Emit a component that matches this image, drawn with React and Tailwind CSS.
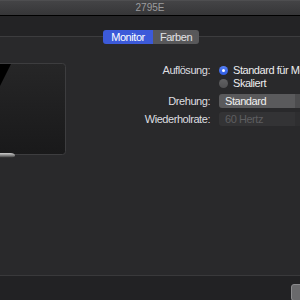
export default function App() {
  const font = { fontFamily: '"Liberation Sans", Arial, sans-serif' };
  return (
    <div
      className="w-[300px] h-[300px] overflow-hidden flex flex-col bg-[#29292b] text-[11px] tracking-[-0.45px]"
      style={font}
    >
      {/* title bar */}
      <div className="h-[16px] shrink-0 bg-gradient-to-b from-[#444446] to-[#363638] border-t border-[#4e4e50] border-b border-b-black flex items-center justify-center">
        <span className="text-[10px] text-[#9c9c9e] leading-none tracking-normal">2795E</span>
      </div>
      {/* toolbar */}
      <div className="h-[21px] shrink-0 bg-[#232325] border-b border-[#3c3c3e]" />
      {/* content */}
      <div className="flex-1 flex flex-col">
        <div className="-mt-[7px] flex justify-center">
          <div className="flex h-[14px] rounded-[3px] overflow-hidden leading-none ml-[2px]">
            <div className="w-[50px] bg-[#3c5ad9] text-white flex items-center justify-center">Monitor</div>
            <div className="w-[46px] bg-[#58585a] text-[#e2e2e4] flex items-center justify-center">Farben</div>
          </div>
        </div>
        <div className="flex items-start mt-[18px]">
          <svg width="66" height="96" viewBox="0 0 66 96" className="shrink-0">
            <defs>
              <linearGradient id="scr" x1="0" y1="0" x2="0" y2="1">
                <stop offset="0" stopColor="#262627" />
                <stop offset="1" stopColor="#19191a" />
              </linearGradient>
              <linearGradient id="stand" x1="0" y1="0" x2="0" y2="1">
                <stop offset="0" stopColor="#d0d0d0" />
                <stop offset="0.5" stopColor="#8a8a8a" />
                <stop offset="1" stopColor="#3a3a3a" />
              </linearGradient>
            </defs>
            <rect x="-10" y="1.5" width="75.5" height="91" rx="3" fill="url(#scr)" stroke="#3d3d3f" />
            <polygon points="-1,2 11,2 0,24" fill="#000" />
            <path d="M-2 91 L10 91 Q15 91 15 93.5 Q15 95.5 10 95.5 L-2 95.5 Z" fill="url(#stand)" />
          </svg>
          <div className="ml-[74px] mt-[2px] flex-1 grid content-start grid-cols-[70px_1fr] gap-x-[9px] text-[#dedee0] leading-none">
            <div className="h-[13px] flex items-center justify-end">Auflösung:</div>
            <div className="h-[13px] flex items-center gap-[5px] whitespace-nowrap overflow-hidden">
              <span className="w-[9px] h-[9px] rounded-full bg-gradient-to-b from-[#5580f7] to-[#2f5be0] flex items-center justify-center shrink-0">
                <span className="w-[3px] h-[3px] rounded-full bg-white" />
              </span>
              <span className="text-[#ececee]">Standard für Monitor</span>
            </div>
            <div className="h-[13px]" />
            <div className="h-[13px] flex items-center gap-[5px] whitespace-nowrap">
              <span className="w-[9px] h-[9px] rounded-full bg-gradient-to-b from-[#626264] to-[#505052] shrink-0" />
              <span className="text-[#ececee]">Skaliert</span>
            </div>
            <div className="mt-[4px] h-[14px] flex items-center justify-end">Drehung:</div>
            <div className="mt-[4px] h-[14px] flex w-[90px] rounded-[3px] overflow-hidden">
              <div className="w-[76px] bg-[#5a5a5c] flex items-center pl-[6px] text-[#f0f0f0]">Standard</div>
              <div className="flex-1 bg-[#4c4c4e]" />
            </div>
            <div className="mt-[4px] h-[14px] flex items-center justify-end">Wiederholrate:</div>
            <div className="mt-[4px] h-[14px] flex w-[90px] rounded-[3px] overflow-hidden">
              <div className="w-[76px] bg-[#333335] flex items-center pl-[6px] text-[#5e5e60]">60 Hertz</div>
              <div className="flex-1 bg-[#2e2e30]" />
            </div>
          </div>
        </div>
      </div>
      {/* bottom bar */}
      <div className="h-[25px] shrink-0 bg-[#222224] border-t border-[#39393b] flex justify-end items-start">
        <div className="mt-[8px] -mr-[4px] w-[13px] h-[17px] rounded-[3px] bg-[#6a6a6c] border border-[#8a8a8c]" />
      </div>
    </div>
  );
}
